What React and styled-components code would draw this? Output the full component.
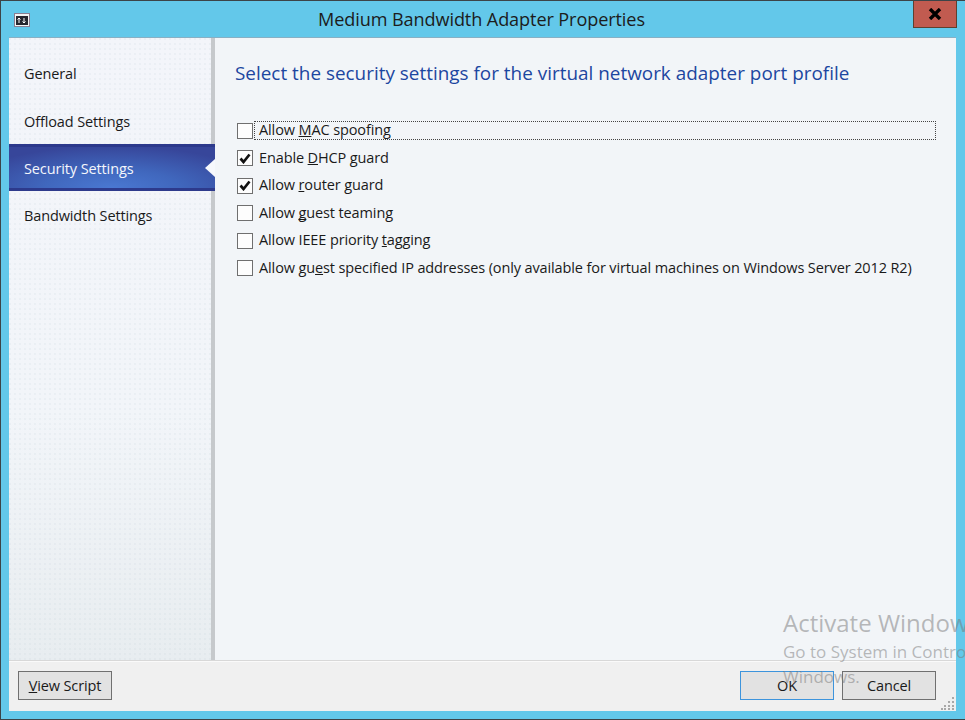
import React from 'react';
import styled, { createGlobalStyle } from 'styled-components';

const GlobalStyle = createGlobalStyle`
  html, body {
    margin: 0;
    padding: 0;
    overflow: hidden;
    background: #63c8ea;
  }
  * {
    box-sizing: border-box;
  }
  u {
    text-decoration-skip-ink: none;
  }
`;

const Window = styled.div`
  position: relative;
  width: 965px;
  height: 720px;
  display: flex;
  flex-direction: column;
  background: #63c8ea;
  border-top: 1px solid #3c4448;
  border-left: 1px solid #3c4448;
  border-bottom: 1px solid #3c4448;
  padding: 0 9px 8px 8px;
  overflow: hidden;
  font-family: "Open Sans", "Noto Sans", sans-serif;
  color: #1a1a1a;
`;

const TitleBar = styled.div`
  position: relative;
  height: 37px;
  flex: none;
  display: flex;
  align-items: center;
  justify-content: center;
`;

const Title = styled.div`
  font-size: 18.1px;
  color: #1c1c1c;
  letter-spacing: -0.1px;
  margin-left: -2px;
  margin-top: -1px;
`;

const AppIcon = styled.svg`
  position: absolute;
  left: 5px;
  top: 12px;
`;

const CloseButton = styled.div`
  position: absolute;
  right: -1px;
  top: -1px;
  width: 44px;
  height: 28px;
  background: #c15b50;
  border: 1px solid #5f4030;
  border-top: none;
  display: flex;
  align-items: center;
  justify-content: center;
`;

const Client = styled.div`
  flex: 1;
  display: flex;
  flex-direction: column;
  min-height: 0;
  box-shadow: 0 -1px 0 #88b0c4;
`;

const Main = styled.div`
  flex: 1;
  display: flex;
  min-height: 0;
`;

const Sidebar = styled.nav`
  width: 206px;
  flex: none;
  padding-top: 11px;
  display: flex;
  flex-direction: column;
  border-right: 4px solid #c6c9cc;
  background-color: #f2f5fa;
  background-image:
    radial-gradient(circle at 1px 1px, rgba(190, 205, 215, 0.16) 0.7px, transparent 1px),
    linear-gradient(180deg, #f3f5fa 0%, #f2f5f9 60%, #e8edf0 100%);
  background-size: 5px 5px, 100% 100%;
`;

const NavItem = styled.div`
  position: relative;
  height: ${p => (p.$active ? '47px' : '47.5px')};
  padding: 1.5px 0 0 15px;
  display: flex;
  align-items: center;
  font-size: 14.5px;
  letter-spacing: -0.12px;
  color: ${p => (p.$active ? '#f4f6fc' : '#1a1a1a')};
  ${p => p.$active && `
    margin-right: -4px;
    z-index: 1;
    border-top: 3px solid #2d3a8c;
    border-bottom: 3px solid #2d3a8c;
    background: radial-gradient(ellipse 150px 42px at 50% 100%, #4a78d2 0%, #4067bd 45%, #37469a 100%);
  `}
`;

const ActiveArrow = styled.span`
  position: absolute;
  right: 0;
  top: 50%;
  margin-top: -9px;
  width: 0;
  height: 0;
  border-top: 9px solid transparent;
  border-bottom: 9px solid transparent;
  border-right: 10px solid #f6f8fc;
`;

const Content = styled.section`
  flex: 1;
  min-width: 0;
  padding: 21px 20px 0 20px;
  background: #f2f5f8;
`;

const Heading = styled.h1`
  margin: 0 0 30px 0;
  font-size: 18.87px;
  line-height: 28px;
  font-weight: 400;
  letter-spacing: 0.02px;
  color: #1c46a0;
`;

const OptionList = styled.div`
  display: flex;
  flex-direction: column;
`;

const Option = styled.label`
  display: flex;
  align-items: center;
  height: 27.5px;
  margin-left: 2px;
`;

const Box = styled.span`
  width: 16px;
  height: 16px;
  flex: none;
  background: #fdfdfd;
  border: 1px solid #6f6f6f;
  display: flex;
  align-items: center;
  justify-content: center;
`;

const OptionText = styled.span`
  margin-left: ${p => (p.$focused ? '1px' : '6px')};
  padding-left: ${p => (p.$focused ? '5px' : '0')};
  height: 19px;
  line-height: 18px;
  font-size: 14.5px;
  letter-spacing: -0.12px;
  white-space: nowrap;
  color: #1a1a1a;
  ${p => p.$focused && `
    flex: 1;
    margin-right: 0;
    outline: 1px dotted #444;
    outline-offset: -1px;
  `}
`;

const Footer = styled.footer`
  height: 51px;
  flex: none;
  display: flex;
  align-items: flex-start;
  justify-content: space-between;
  padding: 10px 20px 0 9px;
  background: #f0f0f0;
  border-top: 1px solid #d8d8d8;
  box-shadow: inset 0 1px 0 #fafafa;
`;

const FooterGroup = styled.div`
  display: flex;
  gap: 8px;
`;

const Button = styled.div`
  width: 94px;
  height: 29px;
  display: flex;
  align-items: center;
  justify-content: center;
  font-size: 14.5px;
  letter-spacing: -0.12px;
  color: #1a1a1a;
  background: #e2e2e2;
  border: 1px solid ${p => (p.$primary ? '#3d94dc' : '#707070')};
`;

const Watermark = styled.div`
  position: absolute;
  left: 782px;
  top: 605px;
  white-space: nowrap;
  color: rgba(120, 120, 120, 0.5);
  pointer-events: none;
`;

const WatermarkTitle = styled.div`
  font-size: 24px;
  line-height: 33px;
`;

const WatermarkText = styled.div`
  font-size: 17px;
  line-height: 25px;
`;

const Grip = styled.svg`
  position: absolute;
  right: 10px;
  bottom: 9px;
`;

const navItems = ['General', 'Offload Settings', 'Security Settings', 'Bandwidth Settings'];

const options = [
  { text: <>Allow <u>M</u>AC spoofing</>, focused: true },
  { text: <>Enable <u>D</u>HCP guard</>, checked: true },
  { text: <>Allow <u>r</u>outer guard</>, checked: true },
  { text: <>Allow <u>g</u>uest teaming</> },
  { text: <>Allow IEEE priority <u>t</u>agging</> },
  { text: <>Allow gu<u>e</u>st specified IP addresses (only available for virtual machines on Windows Server 2012 R2)</> },
];

export default function App() {
  return (
    <Window>
      <GlobalStyle />
      <TitleBar>
        <AppIcon width="16" height="14" viewBox="0 0 16 14">
          <rect x="0.5" y="0.5" width="15" height="13" fill="#f4f4f4" stroke="#8a7f92" />
          <rect x="2" y="3" width="12" height="9" fill="#26262e" />
          <path d="M5 5v5M3.5 6.5L5 5l1.5 1.5M10 5v5M8.5 8.5L10 10l1.5-1.5" stroke="#fff" fill="none" />
        </AppIcon>
        <Title>Medium Bandwidth Adapter Properties</Title>
        <CloseButton>
          <svg width="14" height="12" viewBox="0 0 14 12">
            <path d="M2 1l10 10M12 1L2 11" stroke="#000" strokeWidth="3.4" fill="none" />
          </svg>
        </CloseButton>
      </TitleBar>
      <Client>
        <Main>
          <Sidebar>
            {navItems.map(item => (
              <NavItem key={item} $active={item === 'Security Settings'}>
                {item}
                {item === 'Security Settings' && <ActiveArrow />}
              </NavItem>
            ))}
          </Sidebar>
          <Content>
            <Heading>Select the security settings for the virtual network adapter port profile</Heading>
            <OptionList>
              {options.map((o, i) => (
                <Option key={i}>
                  <Box>
                    {o.checked && (
                      <svg width="12" height="11" viewBox="0 0 12 11">
                        <path d="M1.5 5.5L4.5 9L10.5 1.5" stroke="#111" strokeWidth="2.7" fill="none" />
                      </svg>
                    )}
                  </Box>
                  <OptionText $focused={o.focused}>{o.text}</OptionText>
                </Option>
              ))}
            </OptionList>
          </Content>
        </Main>
        <Footer>
          <Button><span><u>V</u>iew Script</span></Button>
          <FooterGroup>
            <Button $primary>OK</Button>
            <Button>Cancel</Button>
          </FooterGroup>
        </Footer>
      </Client>
      <Watermark>
        <WatermarkTitle>Activate Windows</WatermarkTitle>
        <WatermarkText>Go to System in Control Panel to activate</WatermarkText>
        <WatermarkText>Windows.</WatermarkText>
      </Watermark>
      <Grip width="14" height="14" viewBox="0 0 14 14">
        <path d="M11 1h2v2h-2zM7 5h2v2H7zM11 5h2v2h-2zM3 9h2v2H3zM7 9h2v2H7zM11 9h2v2h-2zM0 12h2v2H0zM3 12h2v2H3zM7 12h2v2H7zM11 12h2v2h-2z" fill="#a8a8a8" />
      </Grip>
    </Window>
  );
}
